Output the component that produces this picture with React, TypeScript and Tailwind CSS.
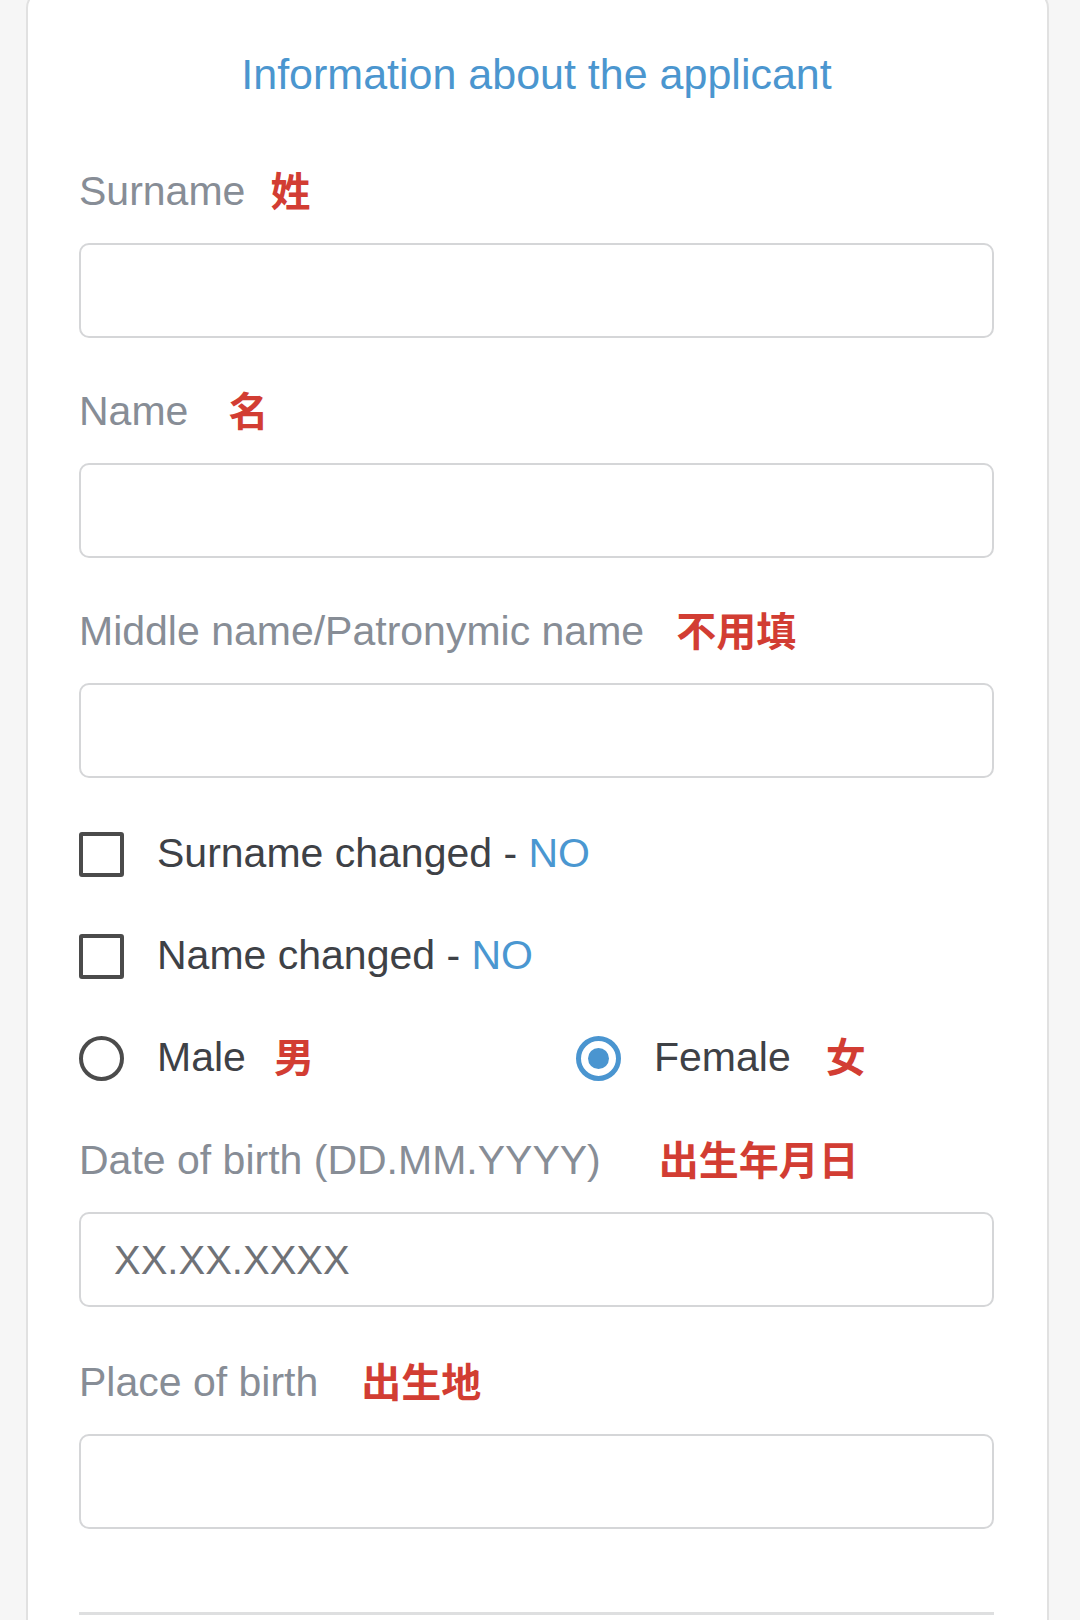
const font = { fontFamily: '"Liberation Sans", Arial, "Noto Sans CJK SC", sans-serif' }

function Label({ text, cn, gap }: { text: string; cn: string; gap: string }) {
  return (
    <div className="h-[50px] flex items-center text-[41px] text-[#878d96] whitespace-nowrap">
      <span>{text}</span>
      <span className={`${gap} text-[40px] font-bold text-[#d23d33]`}>{cn}</span>
    </div>
  )
}

function Field({ placeholder }: { placeholder?: string }) {
  return (
    <div className="mt-[26px] h-[95px] rounded-[10px] border-2 border-[#d5d6d8] bg-white flex items-center pl-[33px] text-[40px] text-[#6f7277]">
      {placeholder}
    </div>
  )
}

function Checkbox({ text }: { text: string }) {
  return (
    <div className="h-[50px] flex items-center text-[41px] text-[#3e4146] whitespace-nowrap">
      <span className="w-[45px] h-[45px] rounded-[3px] border-[4px] border-[#4b4b4b] shrink-0" />
      <span className="ml-[33px]">
        {text} - <span className="text-[#4a97d1]">NO</span>
      </span>
    </div>
  )
}

function Radio({ label, cn, checked, gap }: { label: string; cn: string; checked?: boolean; gap: string }) {
  return (
    <div className="flex items-center whitespace-nowrap">
      {checked ? (
        <span className="w-[45px] h-[45px] rounded-full border-[5px] border-[#4a95d0] flex items-center justify-center shrink-0">
          <span className="w-[21px] h-[21px] rounded-full bg-[#4a95d0]" />
        </span>
      ) : (
        <span className="w-[45px] h-[45px] rounded-full border-[4px] border-[#4b4b4b] shrink-0" />
      )}
      <span className="ml-[33px] text-[41px] text-[#3e4146]">{label}</span>
      <span className={`${gap} text-[40px] font-bold text-[#d23d33]`}>{cn}</span>
    </div>
  )
}

export default function App() {
  return (
    <div className="w-[1080px] h-[1620px] overflow-hidden bg-[#f6f6f6] pl-[26px] pr-[31px]" style={font}>
      <div className="-mt-[10px] h-[1700px] rounded-[18px] border-2 border-[#e1e1e1] bg-white pl-[51px] pr-[53px]">
        {/* Title */}
        <div className="mt-[57px] h-[50px] flex items-center justify-center text-[43px] text-[#4b96cf]">
          Information about the applicant
        </div>

        <div className="mt-[68px]">
          <Label text="Surname" cn="姓" gap="ml-[25px]" />
          <Field />
        </div>

        <div className="mt-[49px]">
          <Label text="Name" cn="名" gap="ml-[40px]" />
          <Field />
        </div>

        <div className="mt-[49px]">
          <Label text="Middle name/Patronymic name" cn="不用填" gap="ml-[32px]" />
          <Field />
        </div>

        {/* Checkboxes */}
        <div className="mt-[51px] flex flex-col gap-[52px]">
          <Checkbox text="Surname changed" />
          <Checkbox text="Name changed" />
          <div className="h-[50px] flex items-center">
            <div className="w-[497px]">
              <Radio label="Male" cn="男" gap="ml-[28px]" />
            </div>
            <Radio label="Female" cn="女" checked gap="ml-[35px]" />
          </div>
        </div>

        <div className="mt-[53px]">
          <Label text="Date of birth (DD.MM.YYYY)" cn="出生年月日" gap="ml-[58px]" />
          <Field placeholder="XX.XX.XXXX" />
        </div>

        <div className="mt-[51px]">
          <Label text="Place of birth" cn="出生地" gap="ml-[43px]" />
          <Field />
        </div>

        <div className="mt-[83px] h-[3px] bg-[#dedfe0]" />
      </div>
    </div>
  )
}
